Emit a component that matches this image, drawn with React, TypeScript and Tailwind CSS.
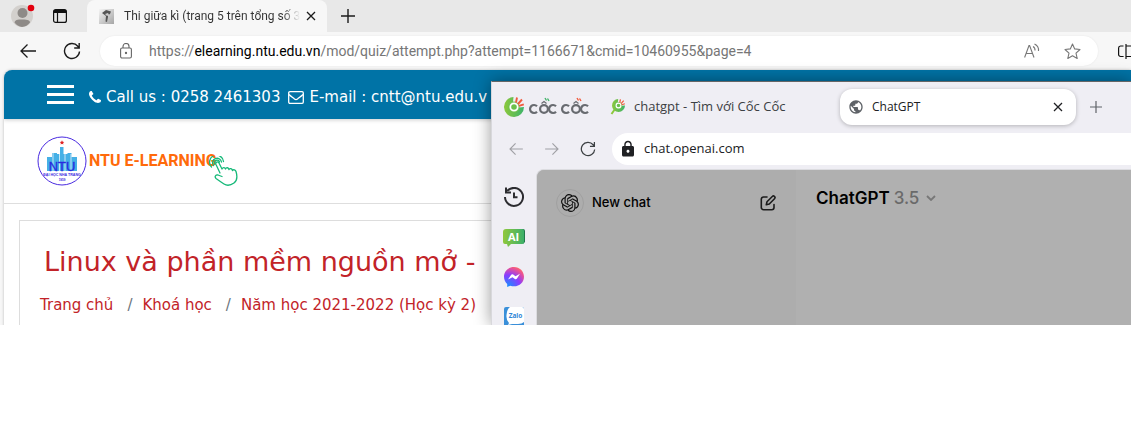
import React from "react";
import { MdLock, MdPublic } from "react-icons/md";
import { SiOpenai } from "react-icons/si";

const edgeFont = "font-['Roboto','Noto_Sans',sans-serif]";
const uiFont = "font-['Open_Sans','Noto_Sans',sans-serif]";
const siteFont = "font-['DejaVu_Sans',sans-serif]";

function CloseIcon({ className }: { className: string }) {
  return (
    <svg viewBox="0 0 10 10" className={className} fill="none" stroke="currentColor" strokeWidth="1.3">
      <path d="M1 1l8 8M9 1L1 9" />
    </svg>
  );
}

function PlusIcon({ className }: { className: string }) {
  return (
    <svg viewBox="0 0 14 14" className={className} fill="none" stroke="currentColor" strokeWidth="1.4">
      <path d="M7 0v14M0 7h14" />
    </svg>
  );
}

function ArrowIcon({ className }: { className: string }) {
  return (
    <svg viewBox="0 0 16 14" className={className} fill="none" stroke="currentColor" strokeWidth="1.3">
      <path d="M16 7H1M7.500 .5L1 7l6.500 6.500" />
    </svg>
  );
}

function ReloadIcon({ className }: { className: string }) {
  return (
    <svg viewBox="0 0 18 18" className={className} fill="none" stroke="currentColor" strokeWidth="1.4">
      <path d="M16.500 9.500A7.500 7.500 0 1 1 14.800 4.200L16 5.600M16.200 1v5h-5" />
    </svg>
  );
}

function PhoneIcon({ className }: { className: string }) {
  return (
    <svg viewBox="0 0 1408 1408" className={className} fill="currentColor">
      <path d="M1408 1112q0 27-10 70.500t-21 68.500q-21 50-122 106-94 51-186 51-27 0-53-3.500t-57.500-12.500-47-14.500-55.500-20.500-49-18q-98-35-175-83-127-79-264-216t-216-264q-48-77-83-175-3-9-18-49t-20.500-55.500-14.500-47-12.500-57.500-3.500-53q0-92 51-186 56-101 106-122 25-11 68.500-21t70.500-10q14 0 21 3 18 6 53 76 11 19 30 54t35 63.500 31 53.500q3 4 17.500 25t21.500 35.500 7 28.500q0 20-28.500 50t-62 55-62 53-28.500 46q0 9 5 22.500t8.500 20.500 14 24 11.500 19q76 137 174 235t235 174q2 1 19 11.500t24 14 20.500 8.500 22.500 5q18 0 46-28.500t53-62 55-62 50-28.500q14 0 28.500 7t35.500 21.500 25 17.500q25 15 53.500 31t63.500 35 54 30q70 35 76 53 3 7 3 21z" />
    </svg>
  );
}

function EnvelopeIcon({ className }: { className: string }) {
  return (
    <svg viewBox="0 0 16 13" className={className} fill="none" stroke="currentColor" strokeWidth="1.3" strokeLinejoin="round">
      <rect x=".7" y=".7" width="14.600" height="11.600" rx="1.200" />
      <path d="M1 3.500c2 2 4 3.200 5.500 4.500q1.500 1.200 3 0C11 6.700 13 5.500 15 3.500" />
    </svg>
  );
}

function EdgeTabs() {
  return (
    <header className={`flex h-8 items-center bg-[#e8e8e8] text-[#1b1b1b] ${edgeFont}`}>
      <button aria-label="Profile" className="ml-[11px] h-8 w-6">
        <svg viewBox="0 0 24 32" className="h-8 w-6">
          <circle cx="11" cy="16" r="11" fill="#d3d0cd" />
          <circle cx="11.500" cy="13" r="5" fill="#8e8a87" />
          <path d="M3.500 22.500C4 20 6 19.500 11.500 19.500s7.500 1 7.500 3A11 11 0 0 1 11 27a11 11 0 0 1-7.500-4.500z" fill="#8e8a87" />
          <circle cx="20" cy="8" r="3.300" fill="#e3000f" />
        </svg>
      </button>
      <button aria-label="Tab actions" className="ml-[18px]">
        <svg viewBox="0 0 14 14" className="size-[14px]" fill="none" stroke="#111">
          <rect x=".6" y=".6" width="12.800" height="12.800" rx="2" strokeWidth="1.200" />
          <path d="M1 2.500h12" strokeWidth="3" />
          <path d="M4.500 3v10" strokeWidth="1.200" />
        </svg>
      </button>
      <div className="ml-5 flex h-8 w-60 items-center rounded-t-lg bg-[#f7f7f7] pl-3 pr-[11px]">
        <svg viewBox="0 0 15 15" className="mr-2.5 size-[15px] shrink-0">
          <defs>
            <linearGradient id="fav" x1="0" x2="1" y1="0" y2="1">
              <stop offset="0" stopColor="#f4f4f4" />
              <stop offset="1" stopColor="#a5a5a5" />
            </linearGradient>
          </defs>
          <rect width="15" height="15" fill="url(#fav)" />
          <path d="M3 4l4-3 5 1.500-1 2.500-2 1v2l-1 5-1.500-.5.5-5.500z" fill="#555" />
          <path d="M6 5l3-1 1 2-2 1z" fill="#ccc" />
        </svg>
        <span className="whitespace-nowrap bg-gradient-to-r from-[#333] from-90% to-transparent bg-clip-text text-xs text-transparent">
          Thi giữa kì (trang 5 trên tổng số 3
        </span>
        <button aria-label="Close tab" className="ml-auto">
          <CloseIcon className="size-[10px]" />
        </button>
      </div>
      <button aria-label="New tab" className="ml-[14px]">
        <PlusIcon className="size-[14px]" />
      </button>
    </header>
  );
}

function EdgeToolbar() {
  return (
    <div className={`flex h-[38px] items-center overflow-hidden bg-[#f7f7f7] text-[#1b1b1b] ${edgeFont}`}>
      <button aria-label="Back" className="ml-5 shrink-0">
        <ArrowIcon className="h-[14px] w-4" />
      </button>
      <button aria-label="Refresh" className="ml-[27px] shrink-0">
        <ReloadIcon className="size-[18px]" />
      </button>
      <div className="ml-[19px] flex h-[30px] min-w-0 flex-1 items-center rounded-full bg-white pl-5 pr-[17px] shadow-[0_0_2px_rgba(0,0,0,0.08)]">
        <svg viewBox="0 0 12 16" className="mr-[17px] h-4 w-3 shrink-0" fill="none" stroke="#666" strokeWidth="1.100">
          <rect x=".6" y="5" width="10.800" height="10" rx="1.500" />
          <path d="M3 5V3.500a3 3 0 0 1 6 0V5" />
          <circle cx="6" cy="10" r=".6" fill="#666" />
        </svg>
        <div className="min-w-0 flex-1 overflow-hidden whitespace-nowrap text-sm text-[#767676]">
          https://<span className="text-black">elearning.ntu.edu.vn</span>/mod/quiz/attempt.php?attempt=1166671&amp;cmid=10460955&amp;page=4
        </div>
        <button aria-label="Read aloud" className="mr-6 shrink-0">
          <svg viewBox="0 0 16 16" className="size-4" fill="none" stroke="#777" strokeWidth="1.100">
            <path d="M.6 14.500L5 2.500h.6l4.400 12M2.200 10.500h6.300M9 3.500a4 4 0 0 1 2 4M10.500 1a7 7 0 0 1 4 7" />
          </svg>
        </button>
        <button aria-label="Add to favorites" className="shrink-0">
          <svg viewBox="0 0 17 17" className="size-[17px]" fill="none" stroke="#777" strokeWidth="1.100" strokeLinejoin="round">
            <path d="M8.500 1l2.200 4.900 5.300.6-4 3.600 1.200 5.400-4.700-2.700-4.700 2.700L5 10.100 1 6.500l5.300-.6z" />
          </svg>
        </button>
      </div>
      <button aria-label="Split screen" className="ml-5 shrink-0">
        <svg viewBox="0 0 13 15" className="h-[15px] w-[13px]" fill="none" stroke="#111" strokeWidth="1.200">
          <path d="M5.500 2H2.500A2 2 0 0 0 .6 4v6.500a2 2 0 0 0 2 2h3M8 0v15M8 2h5M8 12.500h5" />
        </svg>
      </button>
    </div>
  );
}

function NtuLogo() {
  return (
    <svg viewBox="0 0 50 50" className="size-[50px] shrink-0">
      <circle cx="25" cy="25" r="24" fill="#fff" stroke="#4a2be0" strokeWidth="1" />
      <path d="M10 35V21h5v-4h5v4h-.5v-3h3.500v-7h3.500v7h4v3V17h4v4h5.500v14z" fill="#45b0e6" />
      <path d="M16 17v18M22.500 16v19M28 16v19M34 18v17" stroke="#fff" strokeWidth=".7" />
      <path d="M25 4.200l.7 1.500 1.600.2-1.200 1.100.3 1.600-1.400-.8-1.400.8.3-1.600-1.200-1.100 1.600-.2z" fill="#e02222" />
      <text x="25" y="35" textAnchor="middle" fontSize="13" fontWeight="500" fill="#2a2ae0" stroke="#2a2ae0" strokeWidth=".3" className="font-['Liberation_Sans',sans-serif]">NTU</text>
      <text x="25" y="40" textAnchor="middle" fontSize="3.600" fontWeight="bold" fill="#3a2ae0" className="font-['Liberation_Sans',sans-serif]">ĐẠI HỌC NHA TRANG</text>
      <text x="25" y="44.500" textAnchor="middle" fontSize="3" fontWeight="bold" fill="#3a2ae0" className="font-['Liberation_Sans',sans-serif]">1959</text>
    </svg>
  );
}

function Site() {
  return (
    <main className={`ml-1 overflow-hidden rounded-tl-lg bg-white shadow-[0_0_3px_rgba(0,0,0,0.25)] ${siteFont}`}>
      <div className="relative flex h-[49px] items-center bg-[#0073a6] pl-[43px] text-[15px] text-white shadow-[0_1px_4px_rgba(0,0,0,0.2)]">
        <button aria-label="Menu" className="flex w-[27px] flex-col gap-[5px]">
          <span className="h-[3px] bg-white" />
          <span className="h-[3px] bg-white" />
          <span className="h-[3px] bg-white" />
        </button>
        <div className="ml-[15px] flex items-center whitespace-nowrap pt-[5px]">
          <PhoneIcon className="mr-[5px] size-3" />
          Call us : 0258 2461303
          <EnvelopeIcon className="ml-2 mr-[5px] h-[13px] w-4" />
          E-mail : cntt@ntu.edu.v
        </div>
      </div>
      <div className="flex h-[85px] items-center border-b border-[#dedede] pl-[33px]">
        <a href="#home" className="flex items-center">
          <NtuLogo />
          <span className="ml-[2px] whitespace-nowrap font-['Roboto',sans-serif] text-base leading-5 font-bold text-[#ff6a0a]">
            NTU E-LEARNING
          </span>
          <svg viewBox="0 0 30 31" className="-ml-2 mt-5 h-[31px] w-[30px]" fill="none" stroke="#16b979" strokeWidth="1.300" strokeLinecap="round" strokeLinejoin="round">
            <path d="M11 17L7 8.500c-1-2.500 2-3.500 3-1.500l3 6c1-2 3-1.500 3.500 0 1-2 3-1.500 3.500.5 1-1.500 3-1 3.500 1 1-1.500 3-.5 3.500 1 1.500 5 1.500 9-2 11.500s-7 3-10 1-4.500-3-8-5.500c-2-2 0-4 2-3.500l4 1.500" />
            <path d="M4.500 9.500a4.500 4.500 0 1 1 8-3.500M2.500 11A7 7 0 1 1 14.500 5.500M6 8a2.500 2.500 0 1 1 4.500-2" />
          </svg>
        </a>
      </div>
      <section className="ml-[15px] mr-4 mt-4 h-[140px] border border-[#ddd] pl-5 pt-[25px] text-[#c22328]">
        <h1 className="ml-1 whitespace-nowrap text-[27px] leading-8">Linux và phần mềm nguồn mở -</h1>
        <nav aria-label="Breadcrumb" className="mt-[17px] flex whitespace-nowrap text-[15px] leading-5">
          <a href="#home">Trang chủ</a>
          <span className="ml-[14px] mr-[10px] text-[#6c757d]">/</span>
          <a href="#courses">Khoá học</a>
          <span className="ml-[14px] mr-[10px] text-[#6c757d]">/</span>
          <a href="#year">Năm học 2021-2022 (Học kỳ 2)</a>
        </nav>
      </section>
    </main>
  );
}

function CocCocMark() {
  return (
    <g>
      <defs>
        <linearGradient id="coc" x1="0" x2="1">
          <stop offset="0" stopColor="#8cc83c" />
          <stop offset="1" stopColor="#3db36a" />
        </linearGradient>
      </defs>
      <path d="M9.500 0A10 10 0 1 0 20 10l-5 .5A5 5 0 1 1 9 5z" fill="url(#coc)" />
      <circle cx="10" cy="10" r="5.500" fill="#6cc04c" />
      <circle cx="10" cy="10" r="3.700" fill="none" stroke="#fff" strokeWidth="1.800" />
      <path d="M12 5.500L13 .5M14 7l4-4.500M15 8.800l4.800-1.500" stroke="#f15a3c" strokeWidth="1.900" />
    </g>
  );
}

function CocCocLogo() {
  return (
    <svg viewBox="0 0 85 22" className="h-[22px] w-[85px]" aria-label="Cốc Cốc">
      <g transform="translate(0 1)">
        <CocCocMark />
      </g>
      <g fill="none" stroke="#686b70" strokeWidth="2.200">
        <path d="M33 10.300a4 4 0 1 0 0 5.400" />
        <circle cx="40" cy="13" r="3.900" />
        <path d="M52 10.300a4 4 0 1 0 0 5.400M65 10.300a4 4 0 1 0 0 5.400" />
        <circle cx="72" cy="13" r="3.900" />
        <path d="M84 10.300a4 4 0 1 0 0 5.400" />
        <path d="M37.500 7.500l2.500-2 2.500 2M69.500 7.500l2.500-2 2.500 2" strokeWidth="1.200" />
      </g>
      <path d="M41 2l1.500 2.500M43.500 2.500l1.500 2.500" stroke="#43b36a" strokeWidth="1.400" />
      <path d="M73 2l1.500 2.500M75.500 2.500l1.500 2.500" stroke="#f15a3c" strokeWidth="1.400" />
    </svg>
  );
}

function SideRail() {
  return (
    <nav aria-label="Sidebar" className="flex w-11 shrink-0 flex-col items-center gap-5 pt-[22px]">
      <button aria-label="History">
        <svg viewBox="0 0 20 20" className="size-5" fill="none" stroke="#2c2c30" strokeWidth="2">
          <path d="M3.200 4A9 9 0 1 1 1 10" />
          <path d="M2 .5v5h5M10 5.500v4.700h3.500" />
        </svg>
      </button>
      <button aria-label="AI chat">
        <svg viewBox="0 0 22 20" className="h-5 w-[22px]">
          <defs>
            <linearGradient id="ai" x1="0" x2="1">
              <stop offset="0" stopColor="#90c83c" />
              <stop offset="1" stopColor="#3cb06a" />
            </linearGradient>
          </defs>
          <path d="M5 2h15a2 2 0 0 1 2 2v11l-2 2z" fill="#23784a" />
          <path d="M3 2h16a2 2 0 0 1 2 2v11a2 2 0 0 1-2 2H8l-3 3-1-3H2a2 2 0 0 1-2-2V5a3 3 0 0 1 3-3z" fill="url(#ai)" />
          <text x="10.500" y="13.500" textAnchor="middle" fontSize="11" fontWeight="bold" fill="#fff" className="font-['Open_Sans',sans-serif]">AI</text>
        </svg>
      </button>
      <button aria-label="Messenger">
        <svg viewBox="0 0 20 20" className="size-5">
          <defs>
            <radialGradient id="msg" cx=".2" cy="1" r="1.100">
              <stop offset="0" stopColor="#1292ff" />
              <stop offset=".55" stopColor="#8a3cff" />
              <stop offset=".85" stopColor="#e4509c" />
              <stop offset="1" stopColor="#ff6968" />
            </radialGradient>
          </defs>
          <path d="M10 0C4.300 0 0 4.200 0 9.700c0 2.900 1.200 5.400 3.200 7.200V20l3-1.300c1.200.4 2.500.6 3.800.6 5.700 0 10-4.200 10-9.600S15.700 0 10 0z" fill="url(#msg)" />
          <path d="M4 12.500l3-4.600c.5-.8 1.500-.9 2.200-.4l2.300 1.700L16 6.800l-3 4.700c-.5.800-1.500.9-2.200.4L8.500 10.200z" fill="#fff" />
        </svg>
      </button>
      <button aria-label="Zalo">
        <svg viewBox="0 0 20 20" className="size-5">
          <rect width="20" height="20" rx="2" fill="#3a8fd9" />
          <path d="M6 0h12a2 2 0 0 1 2 2v13q-2 2-6 2H8l-4 1 1-2Q2 13 2.500 8 3 2 6 0z" fill="#fff" />
          <text x="11.500" y="11" textAnchor="middle" fontSize="6.500" fontWeight="bold" fill="#2f86d6" className="font-['Open_Sans',sans-serif]">Zalo</text>
        </svg>
      </button>
    </nav>
  );
}

function CocCocWindow() {
  return (
    <div className={`absolute bottom-0 left-[491px] right-0 top-[81px] flex flex-col border-l border-t border-l-[#d8d8dc] border-t-[#666] bg-[#efeef4] shadow-[0_0_16px_rgba(0,0,0,0.4)] ${uiFont}`}>
      <header className="flex h-[50px] shrink-0 items-center pl-3 text-[13px] text-[#3c4043]">
        <button aria-label="Cốc Cốc menu">
          <CocCocLogo />
        </button>
        <div className="ml-[21px] flex w-[230px] shrink-0 items-center">
          <svg viewBox="0 0 16 18" className="mr-2 h-[18px] w-4">
            <path d="M5 11l-3.500 5" stroke="#8cc83c" strokeWidth="2" />
            <g transform="translate(2 1) scale(.65)">
              <CocCocMark />
            </g>
          </svg>
          <span className="whitespace-nowrap">chatgpt - Tìm với Cốc Cốc</span>
        </div>
        <div className="flex h-9 w-[236px] shrink-0 items-center rounded-xl bg-white pl-2 pr-[13px] text-xs text-[#202124] shadow-[0_1px_4px_rgba(0,0,0,0.25)]">
          <MdPublic className="mr-2 size-4 text-[#5f6368]" />
          ChatGPT
          <button aria-label="Close tab" className="ml-auto">
            <CloseIcon className="size-[10px]" />
          </button>
        </div>
        <button aria-label="New tab" className="ml-[14px] text-[#5f6368]">
          <PlusIcon className="size-3" />
        </button>
      </header>
      <div className="mt-px flex h-8 shrink-0 items-center pl-[17px]">
        <button aria-label="Back" className="text-[#a0a0a5]">
          <ArrowIcon className="h-3 w-[14px]" />
        </button>
        <button aria-label="Forward" className="ml-[22px] text-[#a0a0a5]">
          <ArrowIcon className="h-3 w-[14px] rotate-180" />
        </button>
        <button aria-label="Reload" className="ml-[21px] text-[#3c4043]">
          <ReloadIcon className="size-4" />
        </button>
        <div className="ml-4 flex h-8 flex-1 items-center rounded-l-full bg-white pl-[7px] text-[13px] text-[#202124]">
          <MdLock className="mr-[7px] size-[18px] text-[#202124]" />
          chat.openai.com
        </div>
      </div>
      <div className="flex min-h-0 flex-1">
        <SideRail />
        <div className="mt-1 flex flex-1 overflow-hidden rounded-tl-lg border-l border-t border-[#dcdce0] bg-[#b0b0b0] font-['Inter',sans-serif] text-black">
          <aside className="flex w-[259px] shrink-0 items-start bg-[#adadad] pl-[19px] pr-5 pt-[19px]">
            <a href="#new" className="flex flex-1 items-center text-[13px] font-medium">
              <span className="mr-2 flex size-7 items-center justify-center rounded-full border border-[#a0a0a0]">
                <SiOpenai className="size-[18px] text-[#111]" />
              </span>
              New chat
            </a>
            <button aria-label="Edit" className="mt-[6px]">
              <svg viewBox="0 0 16 16" className="size-4" fill="none" stroke="#1c1c1c" strokeWidth="1.600" strokeLinejoin="round" strokeLinecap="round">
                <path d="M7 2H3.500A2.200 2.200 0 0 0 1.300 4.200v8.300a2.200 2.200 0 0 0 2.200 2.200h8.300a2.200 2.200 0 0 0 2.200-2.200V9.500" />
                <path d="M12.300 1.500a1.500 1.500 0 0 1 2.200 2.200L9.300 9l-3 .7.700-3z" />
              </svg>
            </button>
          </aside>
          <button className="flex items-center gap-1 self-start pl-5 pt-4 text-[17px] leading-6 font-semibold">
            ChatGPT
            <span className="font-medium text-[#6a6a6a]">3.5</span>
            <svg viewBox="0 0 10 6" className="ml-[3px] h-[6px] w-[10px]" fill="none" stroke="#777" strokeWidth="1.800">
              <path d="M1 1l4 4 4-4" />
            </svg>
          </button>
        </div>
      </div>
    </div>
  );
}

export default function App() {
  return (
    <div className="relative h-[325px] w-full overflow-hidden bg-[#f7f7f7]">
      <EdgeTabs />
      <EdgeToolbar />
      <Site />
      <CocCocWindow />
    </div>
  );
}
